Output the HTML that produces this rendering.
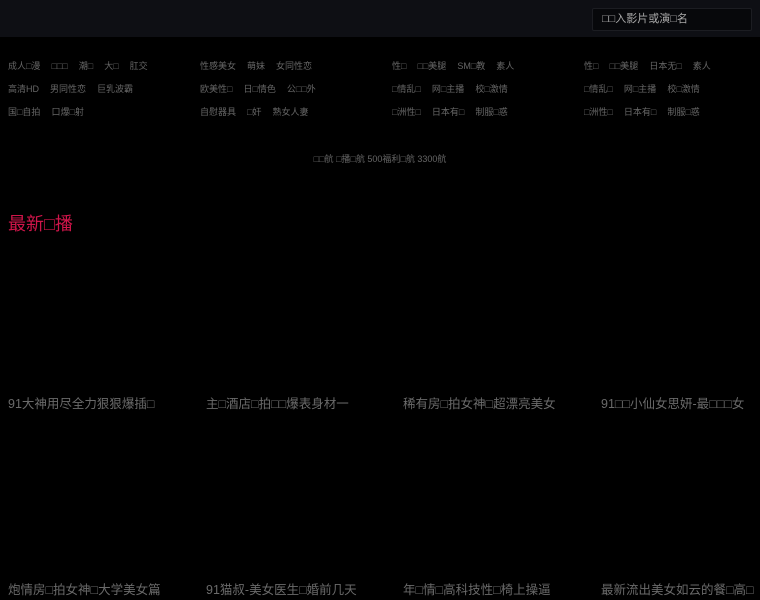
<!DOCTYPE html>
<html><head><meta charset="utf-8"><style>
*{margin:0;padding:0;box-sizing:border-box}
body{width:760px;height:600px;background:#000;overflow:hidden;font-family:"Liberation Sans","Noto Sans CJK SC",sans-serif;position:relative}
.hdr{position:absolute;left:0;top:0;width:760px;height:37px;background:#0e0f14}
.search{position:absolute;left:592px;top:8px;width:160px;height:23px;background:#07080b;border:1px solid #1c1d22;border-radius:2px;color:#aaa;font-size:11px;line-height:21px;padding-left:9px}
.nav{position:absolute;font-size:9px;color:#666;white-space:nowrap}
.nav span{margin-right:11px}
.links{position:absolute;top:152px;left:0;width:760px;text-align:center;font-size:9px;color:#666}
.title{position:absolute;left:8px;top:210px;font-size:18px;color:#d0154a}
.it{position:absolute;font-size:12.5px;color:#6a6a6a;white-space:nowrap;overflow:hidden;width:190px}
</style></head><body>
<div class="hdr"><div class="search">□□入影片或演□名</div></div>
<div class="nav" style="left:8px;top:59px"><span>成人□漫</span><span>□□□</span><span>潮□</span><span>大□</span><span>肛交</span></div>
<div class="nav" style="left:8px;top:82px"><span>高清HD</span><span>男同性恋</span><span>巨乳波霸</span></div>
<div class="nav" style="left:8px;top:105px"><span>国□自拍</span><span>口爆□射</span></div>
<div class="nav" style="left:200px;top:59px"><span>性感美女</span><span>萌妹</span><span>女同性恋</span></div>
<div class="nav" style="left:200px;top:82px"><span>欧美性□</span><span>日□情色</span><span>公□□外</span></div>
<div class="nav" style="left:200px;top:105px"><span>自慰器具</span><span>□奸</span><span>熟女人妻</span></div>
<div class="nav" style="left:392px;top:59px"><span>性□</span><span>□□美腿</span><span>SM□教</span><span>素人</span></div>
<div class="nav" style="left:392px;top:82px"><span>□情乱□</span><span>网□主播</span><span>校□激情</span></div>
<div class="nav" style="left:392px;top:105px"><span>□洲性□</span><span>日本有□</span><span>制服□惑</span></div>
<div class="nav" style="left:584px;top:59px"><span>性□</span><span>□□美腿</span><span>日本无□</span><span>素人</span></div>
<div class="nav" style="left:584px;top:82px"><span>□情乱□</span><span>网□主播</span><span>校□激情</span></div>
<div class="nav" style="left:584px;top:105px"><span>□洲性□</span><span>日本有□</span><span>制服□惑</span></div>
<div class="links">□□航 □播□航 500福利□航 3300航</div>
<div class="title">最新□播</div>
<div class="it" style="left:8px;top:393px">91大神用尽全力狠狠爆插□</div>
<div class="it" style="left:206px;top:393px">主□酒店□拍□□爆表身材一</div>
<div class="it" style="left:403px;top:393px">稀有房□拍女神□超漂亮美女</div>
<div class="it" style="left:601px;top:393px;width:159px">91□□小仙女思妍-最□□□女</div>
<div class="it" style="left:8px;top:579px">炮情房□拍女神□大学美女篇</div>
<div class="it" style="left:206px;top:579px">91猫叔-美女医生□婚前几天</div>
<div class="it" style="left:403px;top:579px">年□情□高科技性□椅上操逼</div>
<div class="it" style="left:601px;top:579px;width:159px">最新流出美女如云的餐□高□</div>
</body></html>
